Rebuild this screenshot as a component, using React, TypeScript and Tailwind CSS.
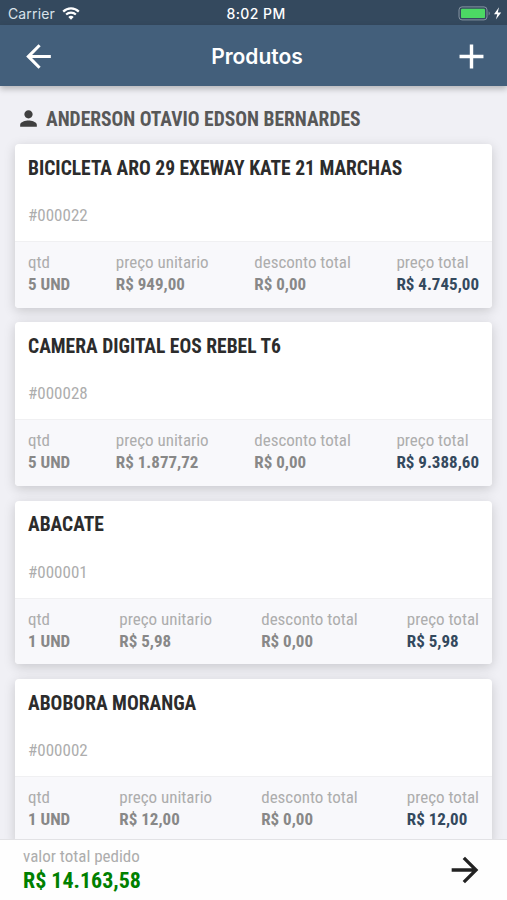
import { MdAdd, MdArrowBack, MdArrowForward, MdPerson } from 'react-icons/md';

interface Product {
  code: string;
  name: string;
  quantity: string;
  unitPrice: string;
  discount: string;
  total: string;
}

interface InfoProps {
  label: string;
  value: string;
  highlight?: boolean;
}

const products: Product[] = [
  {
    code: '#000022',
    name: 'BICICLETA ARO 29 EXEWAY KATE 21 MARCHAS',
    quantity: '5 UND',
    unitPrice: 'R$ 949,00',
    discount: 'R$ 0,00',
    total: 'R$ 4.745,00',
  },
  {
    code: '#000028',
    name: 'CAMERA DIGITAL EOS REBEL T6',
    quantity: '5 UND',
    unitPrice: 'R$ 1.877,72',
    discount: 'R$ 0,00',
    total: 'R$ 9.388,60',
  },
  {
    code: '#000001',
    name: 'ABACATE',
    quantity: '1 UND',
    unitPrice: 'R$ 5,98',
    discount: 'R$ 0,00',
    total: 'R$ 5,98',
  },
  {
    code: '#000002',
    name: 'ABOBORA MORANGA',
    quantity: '1 UND',
    unitPrice: 'R$ 12,00',
    discount: 'R$ 0,00',
    total: 'R$ 12,00',
  },
];

const StatusBar: React.FC = () => (
  <div className="grid h-[25px] shrink-0 grid-cols-3 items-center bg-[#34495e] pt-[2px] font-['Inter',sans-serif] text-[14px] text-white">
    <div className="flex items-center pl-2">
      <span className="tracking-[0.01em] text-[#d9e2ea]">Carrier</span>
      <svg className="ml-[7px]" width="18" height="13" viewBox="0 0 18 13" fill="none">
        <path d="M1.2 4.6a11 11 0 0 1 15.6 0" stroke="white" strokeWidth="2.2" />
        <path d="M4.1 7.6a7 7 0 0 1 9.8 0" stroke="white" strokeWidth="2.1" />
        <path d="M9 12.8 6.3 10a3.8 3.8 0 0 1 5.4 0z" fill="white" />
      </svg>
    </div>
    <span className="pl-[5px] text-center font-medium tracking-[0.03em]">8:02 PM</span>
    <div className="flex items-center justify-end pr-1">
      <svg width="45" height="15" viewBox="0 0 45 15">
        <rect x="1" y="0.9" width="28" height="13" rx="3" fill="none" stroke="#8594a1" />
        <rect x="3" y="2.7" width="24" height="9.4" rx="1.2" fill="#4cd964" />
        <path d="M30.7 5.2q2 2.2 0 4.4z" fill="#8594a1" />
        <path d="M41 1.3 36 8.2h3.3l-1.4 5.3 5.3-7.1h-3.4z" fill="white" />
      </svg>
    </div>
  </div>
);

const Info: React.FC<InfoProps> = ({ label, value, highlight }) => (
  <div className="flex flex-col text-[17px] leading-[22px]">
    <span className="text-[#adadad]">{label}</span>
    <span className={highlight ? 'font-bold text-[#34495e]' : 'font-bold text-[#888888]'}>
      {value}
    </span>
  </div>
);

const ProductCard: React.FC<{ product: Product }> = ({ product }) => (
  <div className="h-[163.5px] shrink-0 overflow-hidden rounded bg-white shadow-[0_3px_12px_rgba(0,0,0,0.17)]">
    <div className="flex h-[98px] flex-col justify-between border-b border-[#f0f0f2] px-[13px] pt-[12.5px] pb-[15px]">
      <h2 className="text-[19.55px] leading-6 font-bold text-[#2c2c2c]">{product.name}</h2>
      <span className="text-[17px] leading-[22px] text-[#adadad]">{product.code}</span>
    </div>
    <div className="flex h-[66px] justify-between bg-[#f8f8fb] px-[13px] pt-[9px]">
      <Info label="qtd" value={product.quantity} />
      <Info label="preço unitario" value={product.unitPrice} />
      <Info label="desconto total" value={product.discount} />
      <Info label="preço total" value={product.total} highlight />
    </div>
  </div>
);

const App: React.FC = () => {
  return (
    <div className="flex h-screen flex-col overflow-hidden bg-[#f0f0f5] font-['Roboto_Condensed','Roboto',sans-serif] font-stretch-75%">
      <StatusBar />
      <header className="z-10 flex h-[61px] shrink-0 items-center justify-between bg-[#435f7b] pr-[17px] pl-5 text-white shadow-[0_3px_6px_rgba(0,0,0,0.25)]">
        <MdArrowBack size={37} className="mt-px" />
        <h1 className="pt-[3px] pl-[6px] font-['Inter',sans-serif] text-[21px] font-semibold">
          Produtos
        </h1>
        <MdAdd size={41} className="mt-px -mr-0.5" />
      </header>

      <main className="flex min-h-0 flex-1 flex-col overflow-hidden px-[15px]">
        <div className="-mx-px flex h-[58px] shrink-0 items-center pt-[9px] pl-[2px]">
          <MdPerson size={25} className="-mt-[3px] text-[#404040]" />
          <span className="ml-[5px] text-[19.55px] font-bold text-[#585858]">
            ANDERSON OTAVIO EDSON BERNARDES
          </span>
        </div>
        <div className="flex flex-col gap-[14.9px]">
          {products.map((product) => (
            <ProductCard key={product.code} product={product} />
          ))}
        </div>
      </main>

      <footer className="z-10 flex h-[61px] shrink-0 items-center justify-between border-t border-[#e2e2e5] bg-[#fefefe] pr-[22px] pl-[23px]">
        <div className="flex flex-col">
          <span className="text-[17px] leading-[22px] text-[#adadad]">valor total pedido</span>
          <span className="text-[22px] leading-7 font-bold text-[#008000]">R$ 14.163,58</span>
        </div>
        <MdArrowForward size={40} className="text-[#222222]" />
      </footer>
    </div>
  );
};

export default App;
